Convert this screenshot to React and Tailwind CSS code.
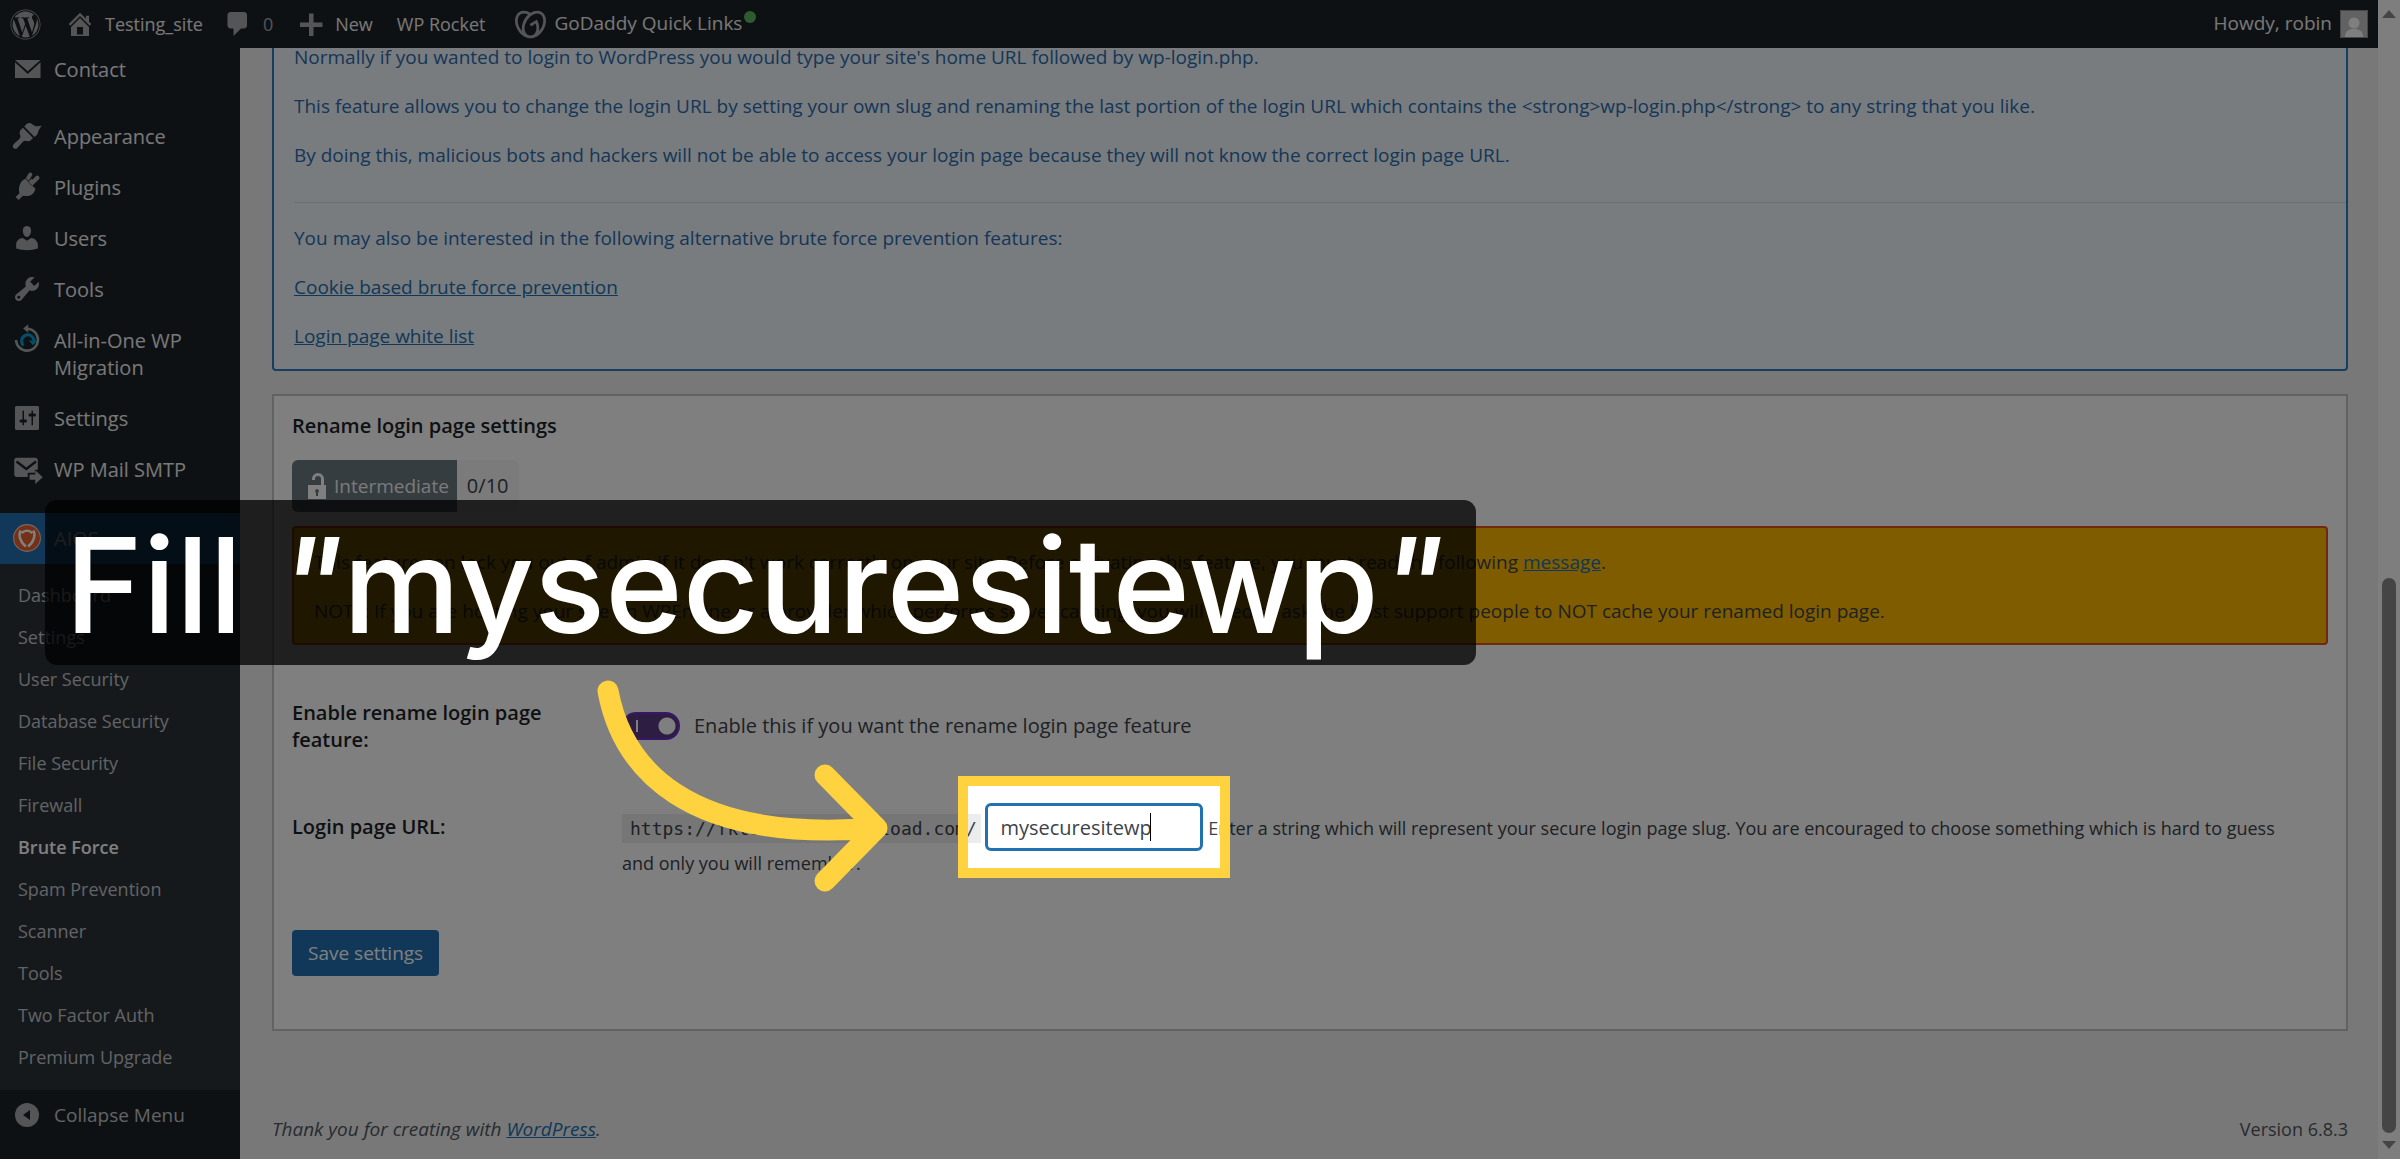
import { FaWordpress } from "react-icons/fa";
import { SiGodaddy } from "react-icons/si";

const menuTop = [
  { label: "Contact", icon: "mail", gap: true },
  { label: "Appearance", icon: "brush" },
  { label: "Plugins", icon: "plug" },
  { label: "Users", icon: "user" },
  { label: "Tools", icon: "wrench" },
  { label: "All-in-One WP Migration", icon: "migrate" },
  { label: "Settings", icon: "sliders" },
  { label: "WP Mail SMTP", icon: "smtp" },
];

const subMenu = [
  "Dashboard",
  "Settings",
  "User Security",
  "Database Security",
  "File Security",
  "Firewall",
  "Brute Force",
  "Spam Prevention",
  "Scanner",
  "Tools",
  "Two Factor Auth",
  "Premium Upgrade",
];

// All drawn on a 20x20 grid
const icons = {
  mail: <path d="M2 4h17L10.500 11.500zM2 5.500l8.500 7.800L19 5.500V16H2z" />,
  brush: (
    <>
      <path d="M5.500 6.300 7.300 4.500 14 11.300l-1.700 1.700c-1.300.9-2.700.1-4 .1-1.600.7-3 3.200-4.900 5-1.400 1.300-3.700-.5-2.500-2.300 1.300-1.900 3.900-3 4.700-4.800.4-1.300-1.200-3-.1-4.700z" />
      <path d="M8.200 3.600 9.900 1.800c1.600-1 3-.3 4.300.8 1.300 1 3.200 1 5.600.5-1.500 1.700-2.300 3.300-2.600 5.100l-.6 1.100-1.600 1.300z" />
    </>
  ),
  plug: (
    <path d="M13.100 4.400 10.800 6.700l2.600 2.600 4.500-4.500c.6-.6.600-1.400 0-2s-1.400-.6-2 0L13.500 5.200zM8.900 4.400l6.700 6.700c-.6 3-3.200 5.400-6.800 4.900l-1.500-.2-2.900 2.900-2-2 2.600-2.600C3.800 10.600 5.500 6.100 8.900 4.400zM11.200.9l-2 3.300 2 1.600 2.200-3.500c.8-1.300-1.300-2.700-2.200-1.400z" />
  ),
  user: (
    <path d="M10 9.250c-2.270 0-2.730-3.440-2.730-3.440C7 4.020 7.820 2 9.970 2c2.160 0 2.980 2.020 2.710 3.810 0 0-.41 3.440-2.680 3.440zm0 2.570L12.720 10c2.390 0 4.520 2.330 4.520 4.530v2.490s-3.650 1.130-7.240 1.130c-3.650 0-7.240-1.130-7.240-1.130v-2.490c0-2.250 1.940-4.480 4.470-4.480z" />
  ),
  wrench: (
    <path d="M16.680 9.770c-1.340 1.340-3.300 1.670-4.950.99l-5.410 6.520c-.99.99-2.590.99-3.580 0s-.99-2.590 0-3.570l6.520-5.420c-.68-1.650-.35-3.610.99-4.950 1.280-1.280 3.120-1.620 4.720-1.060l-2.890 2.890 2.820 2.820 2.860-2.870c.53 1.580.18 3.390-1.080 4.650zM3.810 16.210c.4.390 1.040.39 1.430 0 .4-.4.400-1.040 0-1.430-.39-.4-1.030-.4-1.430 0-.39.390-.39 1.030 0 1.430z" />
  ),
  migrate: (
    <>
      <path d="M10.500 2.500a7.300 7.300 0 1 1-7.800 7.500" fill="none" stroke="currentColor" strokeWidth="1.700" />
      <path d="M10.800-.5v5.600L7.500 2.300z" />
      <path d="M7.700 13.600a4.100 4.100 0 1 1 6.900-3.100" fill="none" stroke="#00a0d2" strokeWidth="2" />
      <path d="M11.200 10.300h5.600l-2.800 3.200z" fill="#00a0d2" />
    </>
  ),
  sliders: (
    <path
      fillRule="evenodd"
      d="M18 17V3c0-.6-.4-1-1-1H3c-.6 0-1 .4-1 1v14c0 .6.400 1 1 1h14c.6 0 1-.4 1-1zM8 11h1c.550 0 1 .450 1 1s-.450 1-1 1H8v1.500c0 .280-.220.500-.500.500s-.500-.220-.500-.500V13H6c-.550 0-1-.450-1-1s.450-1 1-1h1V5.500c0-.280.220-.500.500-.500s.500.220.500.500V11zM13 9h-1c-.550 0-1-.450-1-1s.450-1 1-1h1V5.500c0-.280.220-.500.500-.500s.500.220.500.500V7h1c.550 0 1 .450 1 1s-.450 1-1 1h-1v5.500c0 .280-.220.500-.500.500s-.500-.220-.500-.500V9z"
    />
  ),
  smtp: (
    <>
      <path d="M3 2.500h12.500c1 0 1.700.7 1.700 1.700v6.300h-2v2h-4.700v2.800H3.200c-1 0-1.700-.7-1.700-1.700V4.200c0-.9.600-1.700 1.500-1.700z" />
      <path d="M3 5l6.500 5L16 5" fill="none" stroke="#1d2327" strokeWidth="1.600" />
      <path d="M11.700 13.700h3.800v-2.900L20.500 15.500l-5 4.500v-2.900h-3.800z" />
    </>
  ),
};

const Icon = ({ name }) => (
  <svg viewBox="0 0 20 20" fill="currentColor" className="-my-0.5 size-[30px] shrink-0 overflow-visible text-[#a7aaad]">
    {icons[name]}
  </svg>
);

const AdminBar = () => (
  <header className="relative z-5 flex h-12 shrink-0 items-center bg-[#1d2327] px-2.5 text-lg text-[#f0f0f1]">
    <a href="#about" aria-label="About WordPress" className="text-[#a7aaad]">
      <FaWordpress size={31} />
    </a>
    <a href="#site" className="ml-6 flex items-center gap-2.5">
      <svg viewBox="0 0 20 20" fill="currentColor" className="size-[30px] text-[#a7aaad]">
        <path d="M16 8.500l1.530 1.530-1.060 1.060L10 4.600l-6.470 6.490-1.060-1.060L10 2.500l4 4v-2h2v4zm-6-2.460l6 5.990V18H4v-5.970zM12 17v-5H8v5h4z" />
      </svg>
      Testing_site
    </a>
    <a href="#comments" className="ml-5 flex items-center gap-2.5 text-[#a7aaad]">
      <svg viewBox="0 0 20 20" fill="currentColor" className="size-[30px]">
        <path d="M5 2h9c1.100 0 2 .9 2 2v7c0 1.100-.9 2-2 2h-2l-5 5v-5H5c-1.100 0-2-.9-2-2V4c0-1.100.9-2 2-2z" />
      </svg>
      0
    </a>
    <a href="#new" className="ml-6 flex items-center gap-2">
      <svg viewBox="0 0 20 20" fill="currentColor" className="size-[30px] text-[#a7aaad]">
        <path d="M17 9v3h-6v6H8v-6H2V9h6V3h3v6h6z" />
      </svg>
      New
    </a>
    <a href="#rocket" className="ml-6">
      WP Rocket
    </a>
    <a href="#godaddy" className="ml-[30px] flex items-center gap-2 text-[19px]">
      <SiGodaddy size={31} color="#a7aaad" />
      <span className="relative">
        GoDaddy Quick Links
        <span className="absolute top-0.5 left-full ml-0.5 size-3 rounded-full bg-[#5cb85c]" />
      </span>
    </a>
    <a href="#profile" className="ml-auto flex items-center gap-2 text-[19px]">
      Howdy, robin
      <svg viewBox="0 0 26 26" className="size-7 border border-[#8c8f94] bg-[#c5c5c5]">
        <circle cx="13" cy="12" r="5.500" fill="#fff" />
        <path d="M4 26c0-6 4-8 9-8s9 2 9 8z" fill="#fff" />
      </svg>
    </a>
  </header>
);

const Sidebar = () => (
  <nav className="flex w-60 shrink-0 flex-col justify-end bg-[#1d2327] pb-[18px] text-xl leading-[27px] text-[#f0f0f1]">
    <ul>
      {menuTop.map((item) => (
        <li key={item.label} className={item.gap ? "mb-4" : ""}>
          <a href="#menu" className="flex gap-3 py-3 pr-4 pl-3">
            <Icon name={item.icon} />
            {item.label}
          </a>
        </li>
      ))}
    </ul>
    <a href="#aios" className="mt-[18px] flex gap-3 bg-[#2271b1] py-3 pl-3">
      <svg viewBox="0 0 28 28" className="-my-0.5 size-[30px] shrink-0">
        <circle cx="14" cy="14" r="12.500" fill="#e8622c" stroke="#f0d0c0" strokeWidth="1" />
        <path
          d="M8 7c-1.500 3-1 7 1 10.500 1 1.700 2.500 3.300 4 4.500M20 7c1.500 3 1 7-1 10.500-1 1.700-2.500 3.300-4 4.500M9 9.500C12 6.500 16 6.500 19 9.500"
          fill="none"
          stroke="#fff"
          strokeWidth="2.400"
        />
      </svg>
      AIOS
    </a>
    <ul className="bg-[#2c3338] pt-2.5 pb-3 text-lg leading-[26px] text-[#c3c7cc]">
      {subMenu.map((label) => (
        <li key={label}>
          <a
            href="#submenu"
            className={label === "Brute Force" ? "block py-2 pl-[18px] font-semibold text-white" : "block py-2 pl-[18px]"}
          >
            {label}
          </a>
        </li>
      ))}
    </ul>
    <button className="flex gap-3 py-3 pl-3 text-left text-[19px] text-[#c3c7cc]">
      <svg viewBox="0 0 30 30" className="-my-0.5 size-[30px] shrink-0">
        <circle cx="15" cy="15" r="12" fill="#a7aaad" />
        <path d="M18 10v10l-7-5z" fill="#1d2327" />
      </svg>
      Collapse Menu
    </button>
  </nav>
);

// Dims the page around the login slug field
const Spotlight = () => (
  <span className="pointer-events-none absolute -inset-[27px] z-10 border-10 border-[#ffd23f] shadow-[0_0_0_3000px_rgba(0,0,0,0.5)]" />
);

const Arrow = () => (
  <svg
    viewBox="0 0 300 220"
    fill="none"
    stroke="#ffd23f"
    strokeWidth="21"
    strokeLinecap="round"
    strokeLinejoin="round"
    className="absolute top-[676px] left-[592px] z-20 h-[220px] w-[300px]"
  >
    <path d="M16 15C30 90 92 168 285 152M233 99l52 53M233 205l52-53" />
  </svg>
);

const Scrollbar = () => (
  <div className="flex w-[22px] shrink-0 flex-col items-center bg-[#fcfcfc] py-2.5">
    <svg viewBox="0 0 14 8" className="h-2 w-3.5" fill="#8b8b8b">
      <path d="M7 0l7 8H0z" />
    </svg>
    <div className="mt-auto h-[555px] w-3.5 rounded-full bg-[#8b8b8b]" />
    <svg viewBox="0 0 14 8" className="mt-2 h-2 w-3.5" fill="#8b8b8b">
      <path d="M7 8l7-8H0z" />
    </svg>
  </div>
);

const InfoBox = () => (
  <section className="space-y-[21px] rounded-b border-2 border-[#2e7cc3] bg-[#f2f8fd] pb-[19px] pl-5 text-[#2c6cae]">
    <p>Normally if you wanted to login to WordPress you would type your site's home URL followed by wp-login.php.</p>
    <p>
      This feature allows you to change the login URL by setting your own slug and renaming the last portion of the
      login URL which contains the &lt;strong&gt;wp-login.php&lt;/strong&gt; to any string that you like.
    </p>
    <p className="pb-3">
      By doing this, malicious bots and hackers will not be able to access your login page because they will not know
      the correct login page URL.
    </p>
    <hr className="border-[#d5d8dc]" />
    <p>You may also be interested in the following alternative brute force prevention features:</p>
    <p>
      <a href="#cookie" className="text-[#2271b1] underline">
        Cookie based brute force prevention
      </a>
    </p>
    <p>
      <a href="#whitelist" className="text-[#2271b1] underline">
        Login page white list
      </a>
    </p>
  </section>
);

const SettingsCard = () => (
  <section className="mt-[23px] border-2 border-[#c3c4c7] bg-white px-[18px] pt-4 pb-[53px] text-xl leading-7 text-[#3c434a]">
    <h3 className="font-semibold text-[#1d2327]">Rename login page settings</h3>
    <div className="mt-5 flex h-[52px] w-fit items-center overflow-hidden rounded-md bg-[#f6f6f6]">
      <span className="flex h-full items-center gap-1.5 bg-[#6c7a80] pr-2 pl-3.5 text-[19px] text-[#f4f4f4]">
        <svg viewBox="0 0 22 28" className="h-7 w-[22px]" fill="#fff">
          <path d="M7.500 8V7a4.500 4.500 0 0 1 9 0v6" fill="none" stroke="#fff" strokeWidth="3" />
          <path fillRule="evenodd" d="M2 13h18v14H2zM11 17a2 2 0 0 0-1 3.700V24h2v-3.300A2 2 0 0 0 11 17z" />
        </svg>
        Intermediate
      </span>
      <span className="px-2.5">0/10</span>
    </div>
    <div className="mt-[14px] space-y-[21px] rounded border-2 border-[#e0501e] bg-[#ffb900] px-5 pt-5 pb-[18px] text-[19px] leading-7">
      <p>
        This feature can lock you out of admin if it doesn't work correctly on your site. Before activating this
        feature, you must read the following{" "}
        <a href="#message" className="text-[#2271b1] underline">
          message
        </a>
        .
      </p>
      <p>
        NOTE: If you are hosting your site on WPEngine or a provider which performs server caching, you will need to
        ask the host support people to NOT cache your renamed login page.
      </p>
    </div>
    <div className="mt-[54px] flex items-center">
      <label htmlFor="rename" className="w-[330px] shrink-0 pr-12 leading-[27px] font-semibold text-[#1d2327]">
        Enable rename login page feature:
      </label>
      <span className="relative flex">
        <input
          id="rename"
          type="checkbox"
          defaultChecked
          className="h-7 w-[58px] appearance-none rounded-full border-2 border-[#7030c8] bg-[radial-gradient(circle_at_43px_12px,#fff_8px,#5c3a86_9px)]"
        />
        <span className="absolute top-2 left-3.5 h-3 w-0.5 bg-white" />
      </span>
      <span className="ml-3.5">Enable this if you want the rename login page feature</span>
    </div>
    <div className="mt-[50px] flex">
      <label htmlFor="slug" className="w-[330px] shrink-0 pt-2.5 font-semibold text-[#1d2327]">
        Login page URL:
      </label>
      <div className="pr-6 text-lg leading-6">
        <code className="bg-[#ececed] py-1 pr-1 pl-2 font-['DejaVu_Sans_Mono',monospace]">
          https://fktestsitesdownload.com/
        </code>{" "}
        <span className="relative inline-flex">
          <input
            id="slug"
            defaultValue="mysecuresitewp"
            className="h-12 w-[218px] rounded-md border-3 border-[#2271b1] bg-white px-3 text-xl text-[#3c434a]"
          />
          <span className="absolute top-2.5 left-[165px] h-7 w-px bg-black" />
          <Spotlight />
        </span>{" "}
        Enter a string which will represent your secure login page slug. You are encouraged to choose something which
        is hard to guess and only you will remember.
      </div>
    </div>
    <button className="mt-[55px] block h-[46px] rounded bg-[#2271b1] px-4 text-[19px] text-white">Save settings</button>
  </section>
);

const App = () => {
  return (
    <div className="relative flex h-screen overflow-hidden bg-[#f0f0f1] font-['Open_Sans','Noto_Sans',sans-serif] text-[19px] leading-7">
      <div className="flex min-w-0 flex-1 flex-col">
        <AdminBar />
        <div className="flex min-h-0 flex-1">
          <Sidebar />
          <main className="flex min-w-0 flex-1 flex-col justify-end pr-[30px] pl-8">
            <InfoBox />
            <SettingsCard />
            <footer className="mt-[84px] mb-4 flex justify-between text-[#50575e]">
              <p className="italic">
                Thank you for creating with{" "}
                <a href="#wordpress" className="text-[#2271b1] underline">
                  WordPress
                </a>
                .
              </p>
              <p className="text-lg">Version 6.8.3</p>
            </footer>
          </main>
        </div>
      </div>
      <Scrollbar />
      <Arrow />
      <div className="absolute top-[500px] left-[45px] z-20 rounded-xl bg-black/75 pt-1.5 pr-8 pl-5 font-['Inter',sans-serif] text-[132px] leading-[159px] font-medium whitespace-nowrap text-white">
        Fill <span className="italic">"</span>mysecuresitewp<span className="italic">"</span>
      </div>
    </div>
  );
};

export default App;
